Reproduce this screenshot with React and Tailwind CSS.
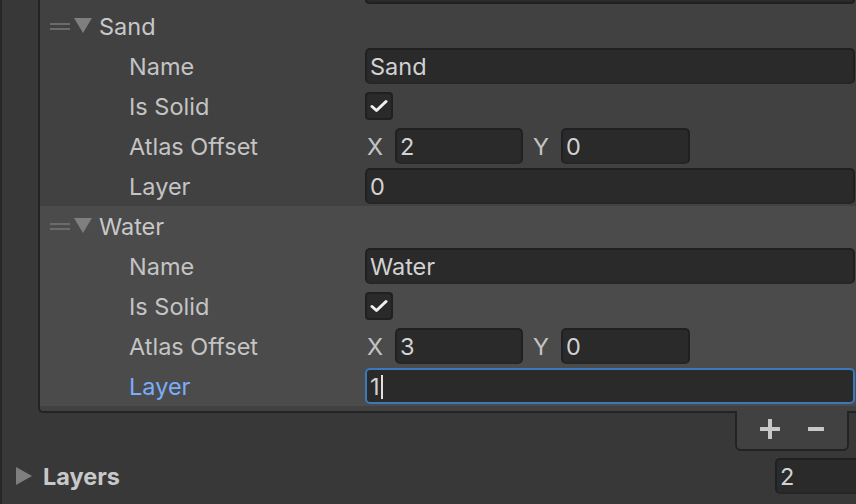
import React from "react";

const font = { fontFamily: "Inter, 'Noto Sans', sans-serif" };

function Field({ children, focused, className = "" }) {
  return (
    <div
      className={`flex h-[36px] items-center rounded-[5px] border-2 bg-[#2a2a2a] pl-[3px] pt-[2px] text-[23.5px] text-[#d2d2d2] ${
        focused ? "border-[#3a79bb]" : "border-[#202020] border-b-[#262626]"
      } ${className}`}
    >
      {children}
    </div>
  );
}

function Checkbox() {
  return (
    <div className="grid h-[28px] w-[28px] place-items-center rounded-[4px] border-2 border-[#202020] bg-[#2a2a2a]">
      <svg width="18" height="14" viewBox="0 0 18 14">
        <path d="M2 7.5 L6.5 11.5 L16 2.5" fill="none" stroke="#f0f0f0" strokeWidth="3" strokeLinecap="round" strokeLinejoin="round" />
      </svg>
    </div>
  );
}

function Row({ label, labelClass = "text-[#c4c4c4]", children }) {
  return (
    <div className="grid h-[40px] grid-cols-[325px_1fr] items-center pr-[1px]">
      <span className={`pl-[89px] pt-[2px] text-[23.5px] ${labelClass}`}>{label}</span>
      <div>{children}</div>
    </div>
  );
}

function ElementHeader({ name }) {
  return (
    <div className="flex h-[40px] items-center pl-[10px]">
      <div className="flex w-[20px] flex-col gap-[3px]">
        <div className="h-[2px] bg-[#6b6b6b]" />
        <div className="h-[2px] bg-[#6b6b6b]" />
      </div>
      <svg className="ml-[4px]" width="18" height="16" viewBox="0 0 18 16">
        <path d="M0 0 H18 L9 15 Z" fill="#7f7f7f" />
      </svg>
      <span className="ml-[7px] pt-[2px] text-[23.5px] text-[#c8c8c8]">{name}</span>
    </div>
  );
}

function Element({ name, x, layer, focused, className }) {
  return (
    <div className={className}>
      <ElementHeader name={name} />
      <Row label="Name">
        <Field>{name}</Field>
      </Row>
      <Row label="Is Solid">
        <Checkbox />
      </Row>
      <Row label="Atlas Offset">
        <div className="flex items-center pt-[2px] text-[23.5px] text-[#c4c4c4]">
          <span className="w-[30px] pl-[2px]">X</span>
          <Field className="-mt-[2px] w-[128px]">{x}</Field>
          <span className="w-[38px] pl-[10px]">Y</span>
          <Field className="-mt-[2px] w-[129px]">0</Field>
        </div>
      </Row>
      <Row label="Layer" labelClass={focused ? "text-[#7baefa]" : "text-[#c4c4c4]"}>
        <Field focused={focused}>
          {layer}
          {focused && <span className="ml-[1px] h-[24px] w-[2px] bg-[#e0e0e0]" />}
        </Field>
      </Row>
    </div>
  );
}

export default function App() {
  return (
    <div className="flex h-[504px] w-[856px] overflow-hidden bg-[#383838]" style={font}>
      <div className="w-[2px] bg-[#262626]" />
      <div className="flex flex-1 flex-col pl-[36px]">
        <div className="rounded-bl-[5px] border-b-2 border-l-2 border-[#232323] bg-[#414141] pb-[5px]">
          <div className="grid h-[6px] grid-cols-[325px_1fr] pr-[1px]">
            <div />
            <div className="h-[4px] rounded-b-[5px] border-x-2 border-b-2 border-[#202020] bg-[#2a2a2a]" />
          </div>
          <Element name="Sand" x="2" layer="0" className="bg-[#414141]" />
          <Element name="Water" x="3" layer="1" focused className="bg-[#4b4b4b]" />
        </div>
        <div className="flex justify-end pr-[7px]">
          <div className="-mt-[2px] flex h-[40px] w-[114px] items-center justify-center gap-[28px] rounded-b-[6px] border-x-2 border-b-2 border-[#232323] bg-[#414141] pb-[2px]">
            <svg width="20" height="20" viewBox="0 0 20 20">
              <path d="M10 1 V19 M1 10 H19" stroke="#c8c8c8" strokeWidth="4" strokeLinecap="round" />
            </svg>
            <svg width="16" height="20" viewBox="0 0 16 20">
              <path d="M1 10 H15" stroke="#c8c8c8" strokeWidth="4" strokeLinecap="round" />
            </svg>
          </div>
        </div>
        <div className="-ml-[36px] mt-[6px] flex h-[37px] items-center pl-[14px]">
          <svg width="16" height="18" viewBox="0 0 16 18">
            <path d="M0 0 L16 9 L0 18 Z" fill="#7f7f7f" />
          </svg>
          <span className="ml-[11px] pt-[3px] text-[23.5px] font-bold text-[#c8c8c8]">Layers</span>
          <div className="ml-auto w-[81px]">
            <Field className="rounded-r-none border-r-0">2</Field>
          </div>
        </div>
      </div>
    </div>
  );
}
